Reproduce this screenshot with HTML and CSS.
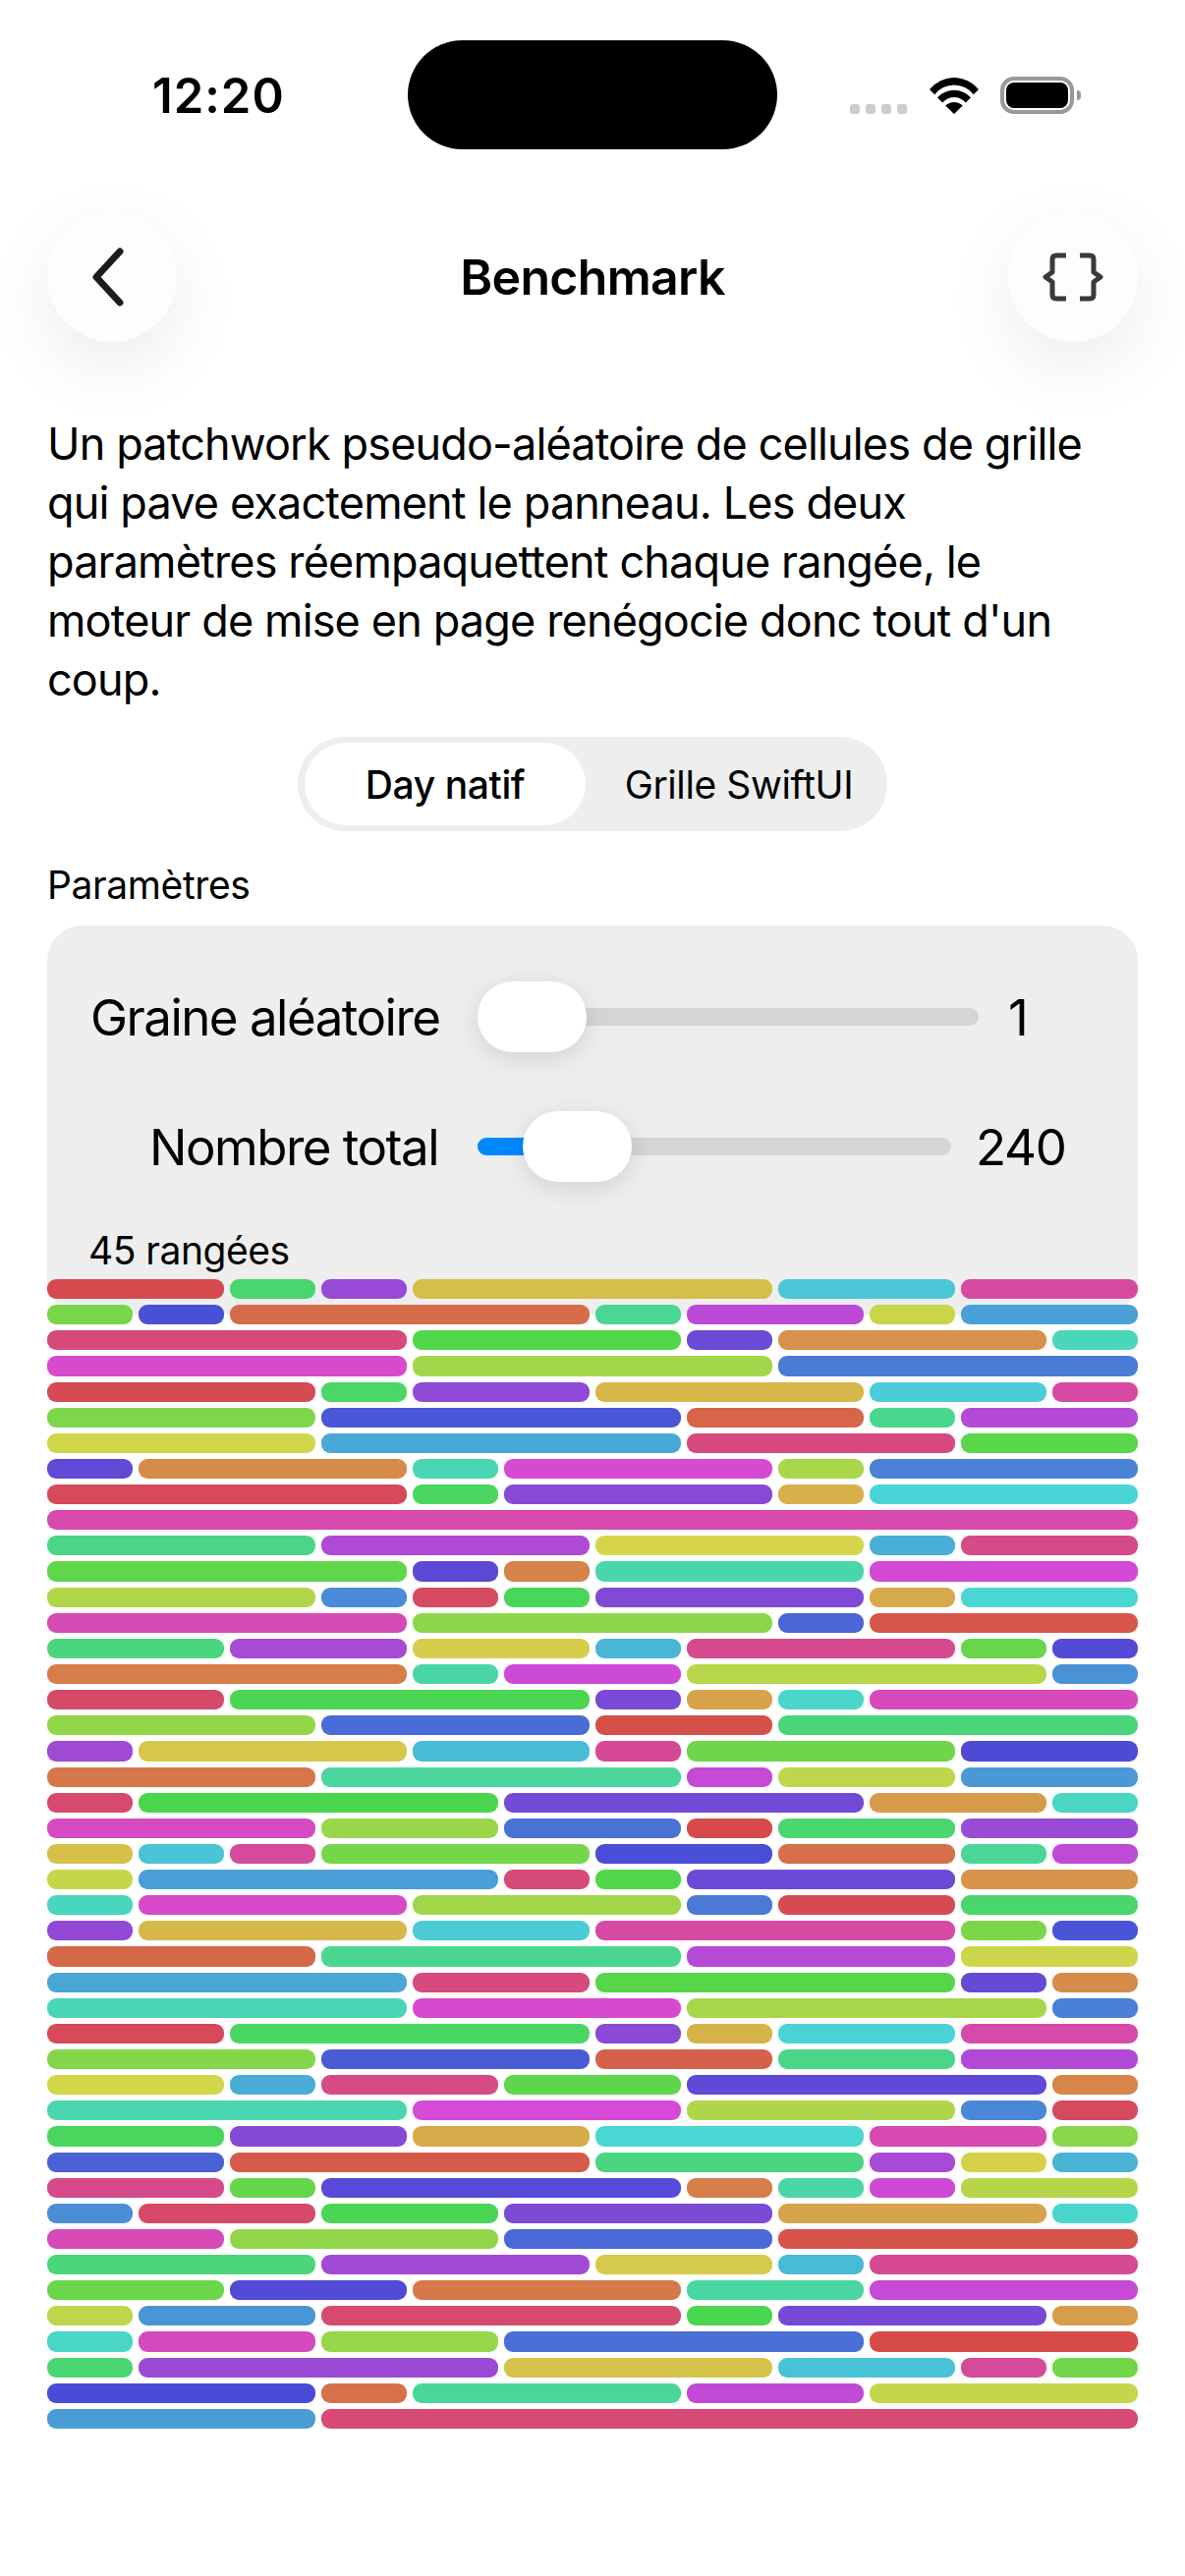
FILE: index.html
```html
<!DOCTYPE html>
<html lang="fr">
<head>
<meta charset="UTF-8">
<meta name="viewport" content="width=device-width, initial-scale=1.0">
<title>Benchmark</title>
<link rel="stylesheet" href="styles.css">
</head>
<body>
  <div class="status-bar">
    <div class="status-left"><span class="time">12:20</span></div>
    <div class="island"></div>
    <div class="status-right">
      <div class="signal"><span></span><span></span><span></span><span></span></div>
      <svg class="wifi" viewBox="0 0 50 37" width="50" height="37">
        <path d="M0 12A32 32 0 0 1 50 12L44.8 17.2A25 25 0 0 0 5.2 17.2Z"/>
        <path d="M8 20.2A23 23 0 0 1 42 20.2L36.8 25.4A15.6 15.6 0 0 0 13.2 25.4Z"/>
        <path d="M16.2 28.5A12.8 12.8 0 0 1 33.8 28.5L25 37Z"/>
      </svg>
      <div class="battery"><div class="battery-level"></div></div>
      <div class="battery-cap"></div>
    </div>
  </div>

  <div class="header">
    <div class="round-button">
      <svg class="back-icon" viewBox="0 0 40 64" width="40" height="64">
        <path class="chevron" d="M32 6 L8 32 L32 58"/>
      </svg>
    </div>
    <h1 class="title">Benchmark</h1>
    <div class="round-button">
      <svg viewBox="-32 -26 64 52" width="64" height="52">
        <path class="braces" d="M-7 -22 H-17 Q-21 -22 -21 -18 V-5 L-28 0 L-21 5 V18 Q-21 22 -17 22 H-7"/>
        <path class="braces" d="M7 -22 H17 Q21 -22 21 -18 V-5 L28 0 L21 5 V18 Q21 22 17 22 H7"/>
      </svg>
    </div>
  </div>

  <div class="content">
    <p class="intro">Un patchwork pseudo-aléatoire de cellules de grille qui pave exactement le panneau. Les deux paramètres réempaquettent chaque rangée, le moteur de mise en page renégocie donc tout d'un coup.</p>

    <div class="segmented">
      <div class="segment segment-active">Day natif</div>
      <div class="segment segment-other">Grille SwiftUI</div>
    </div>

    <div class="section-label">Paramètres</div>

    <div class="panel">
      <div class="slider-row">
        <div class="slider-label">Graine aléatoire</div>
        <div class="track"><div class="thumb"></div></div>
        <div class="slider-value">1</div>
      </div>
      <div class="slider-row">
        <div class="slider-label">Nombre total</div>
        <div class="track">
          <div class="fill"></div>
          <div class="thumb thumb-total"></div>
        </div>
        <div class="slider-value slider-value-wide">240</div>
      </div>
      <div class="row-count">45 rangées</div>
    </div>

    <div class="patchwork" id="patchwork"></div>
  </div>

  <script src="grid.js"></script>
</body>
</html>
```

FILE: styles.css
```css
/* Basic styling */
body {
  margin: 0;
  width: 1206px;
  height: 2622px;
  overflow: hidden;
  background-color: #fff;
  color: #000;
  font-family: Inter, "Noto Sans", sans-serif;
}

/* Status bar */
.status-bar {
  display: flex;
  align-items: flex-start;
  height: 152px;
  padding-top: 41px;
  box-sizing: border-box;
}
.status-left {
  display: flex;
  align-items: flex-end;
  width: 415px;
  height: 75px;
  box-sizing: border-box;
  padding-left: 155px;
}
.time {
  font-size: 49px;
  line-height: 50px;
  margin-bottom: -7px;
  font-weight: 600;
  letter-spacing: 1px;
}
.island {
  width: 376px;
  height: 111px;
  border-radius: 56px;
  background-color: #000;
}
.status-right {
  display: flex;
  align-items: flex-end;
  height: 75px;
  padding-left: 74px;
}
.signal {
  display: flex;
  gap: 6px;
}
.signal span {
  width: 10px;
  height: 10px;
  border-radius: 3px;
  background-color: #ccc;
}
.wifi {
  margin-left: 23px;
  display: block;
}
.battery {
  margin-left: 22px;
  width: 75px;
  height: 38px;
  box-sizing: border-box;
  border: 4px solid #999;
  border-radius: 14px;
  padding: 2px;
}
.battery-level {
  height: 100%;
  border-radius: 8px;
  background-color: #000;
}
.battery-cap {
  width: 4px;
  height: 10px;
  margin: 0 0 14px 3px;
  border-radius: 0 5px 5px 0;
  background-color: #999;
}

/* Header */
.header {
  display: flex;
  align-items: center;
  justify-content: space-between;
  margin-top: 64px;
  padding: 0 48px;
}
.round-button {
  display: flex;
  align-items: center;
  justify-content: center;
  width: 132px;
  height: 132px;
  border-radius: 50%;
  background-color: #fdfdfd;
  box-shadow: 0 24px 72px rgba(0, 0, 0, 0.08);
}
.back-icon {
  margin-right: 8px;
}
.chevron {
  fill: none;
  stroke: #1c1c1c;
  stroke-width: 7;
  stroke-linecap: round;
  stroke-linejoin: round;
}
.braces {
  fill: none;
  stroke: #3a3a3a;
  stroke-width: 5;
  stroke-linejoin: round;
}
.title {
  margin: 0;
  font-size: 50px;
  line-height: 60px;
  font-weight: 600;
  letter-spacing: -0.7px;
}

/* Content */
.content {
  padding: 0 48px;
}
.intro {
  width: 1080px;
  margin: 74px 0 28px;
  font-size: 45px;
  line-height: 60px;
  letter-spacing: -0.85px;
}
.segmented {
  display: flex;
  align-items: center;
  width: 600px;
  height: 96px;
  margin-left: 255px;
  padding: 6px 7px;
  box-sizing: border-box;
  border-radius: 48px;
  background-color: #eee;
}
.segment {
  display: flex;
  align-items: center;
  justify-content: center;
  width: 286px;
  height: 84px;
  border-radius: 42px;
  font-size: 39px;
  letter-spacing: -0.4px;
  flex: none;
}
.segment-active {
  background-color: #fff;
  font-weight: 550;
}
.segment-other {
  padding-left: 26px;
  box-sizing: border-box;
  white-space: nowrap;
}
.section-label {
  margin-top: 32px;
  font-size: 39px;
  line-height: 46px;
  letter-spacing: -0.4px;
}
.panel {
  height: 396px;
  margin-top: 18px;
  padding: 57px 44px 0;
  box-sizing: border-box;
  border-radius: 36px;
  background-color: #eee;
}
.slider-row {
  display: flex;
  align-items: center;
  height: 72px;
  margin-bottom: 60px;
}
.slider-label {
  flex: none;
  width: 354px;
  margin-right: 40px;
  text-align: right;
  font-size: 51px;
  letter-spacing: -1.5px;
  white-space: nowrap;
}
.track {
  position: relative;
  flex: 1;
  height: 18px;
  border-radius: 9px;
  background-color: #d5d5d5;
}
.fill {
  position: absolute;
  left: 0;
  top: 0;
  width: 60px;
  height: 18px;
  border-radius: 9px 0 0 9px;
  background-color: #0088ff;
}
.thumb {
  position: absolute;
  left: 0;
  top: -27px;
  width: 111px;
  height: 72px;
  border-radius: 36px;
  background-color: #fff;
  box-shadow: 0 6px 26px rgba(0, 0, 0, 0.12);
}
.thumb-total {
  left: 46px;
}
.slider-value {
  flex: none;
  width: 88px;
  margin-left: 30px;
  font-size: 51px;
  letter-spacing: -1.2px;
}
.slider-value-wide {
  width: 121px;
  margin-left: 25px;
}
.row-count {
  margin: -13px 0 0 -2px;
  font-size: 39px;
  line-height: 46px;
  letter-spacing: -0.5px;
}

/* Patchwork grid, sits over the bottom of the panel */
.patchwork {
  position: relative;
  display: grid;
  grid-template-columns: repeat(12, 1fr);
  grid-template-rows: repeat(45, 1fr);
  gap: 6px;
  height: 1170px;
  margin-top: -36px;
}
.cell {
  border-radius: 9px;
}
```

FILE: grid.js
```js
// Spans of each row on the 12 column grid. A 0 is a cell that got no room:
// it draws nothing but still takes its hue.
var rows = [
  [2,1,1,4,2,2], [1,1,4,1,2,1,2], [4,3,1,3,1], [4,4,4], [3,1,2,3,2,1],
  [3,4,2,1,2], [3,4,3,2], [1,3,1,3,1,3], [4,1,3,1,3], [12,0,0,0],
  [3,3,3,1,2], [4,1,1,3,3], [3,1,1,1,3,1,2], [4,4,1,3], [2,2,2,1,3,1,1],
  [4,1,2,4,1], [2,4,1,1,1,3], [3,3,2,4], [1,3,2,1,3,2], [3,4,1,2,2],
  [1,4,4,2,1], [3,2,2,1,2,2], [1,1,1,3,2,2,1,1], [1,4,1,1,3,2], [1,3,3,1,2,2],
  [1,3,2,4,1,1], [3,4,3,2], [4,2,4,1,1], [4,3,4,1], [2,4,1,1,2,2],
  [3,3,2,2,2], [2,1,2,2,4,1], [4,3,3,1,1], [2,2,2,3,2,1], [2,4,3,1,1,1],
  [2,1,4,1,1,1,2], [1,2,2,3,3,1], [2,3,3,4], [3,3,2,1,3], [2,2,3,2,3],
  [1,2,4,1,3,1], [1,2,2,4,3], [1,4,3,2,1,1], [3,1,3,2,3], [3,9]
];

var patchwork = document.getElementById('patchwork');
var index = 0;

rows.forEach(function (row) {
  row.forEach(function (span) {
    var hue = (358.7 + index * 137) % 360;
    index++;
    if (span === 0) return;
    var cell = document.createElement('div');
    cell.className = 'cell';
    cell.style.gridColumn = 'span ' + span;
    cell.style.backgroundColor = 'hsl(' + hue + ', 63%, 56.5%)';
    patchwork.appendChild(cell);
  });
});
```
